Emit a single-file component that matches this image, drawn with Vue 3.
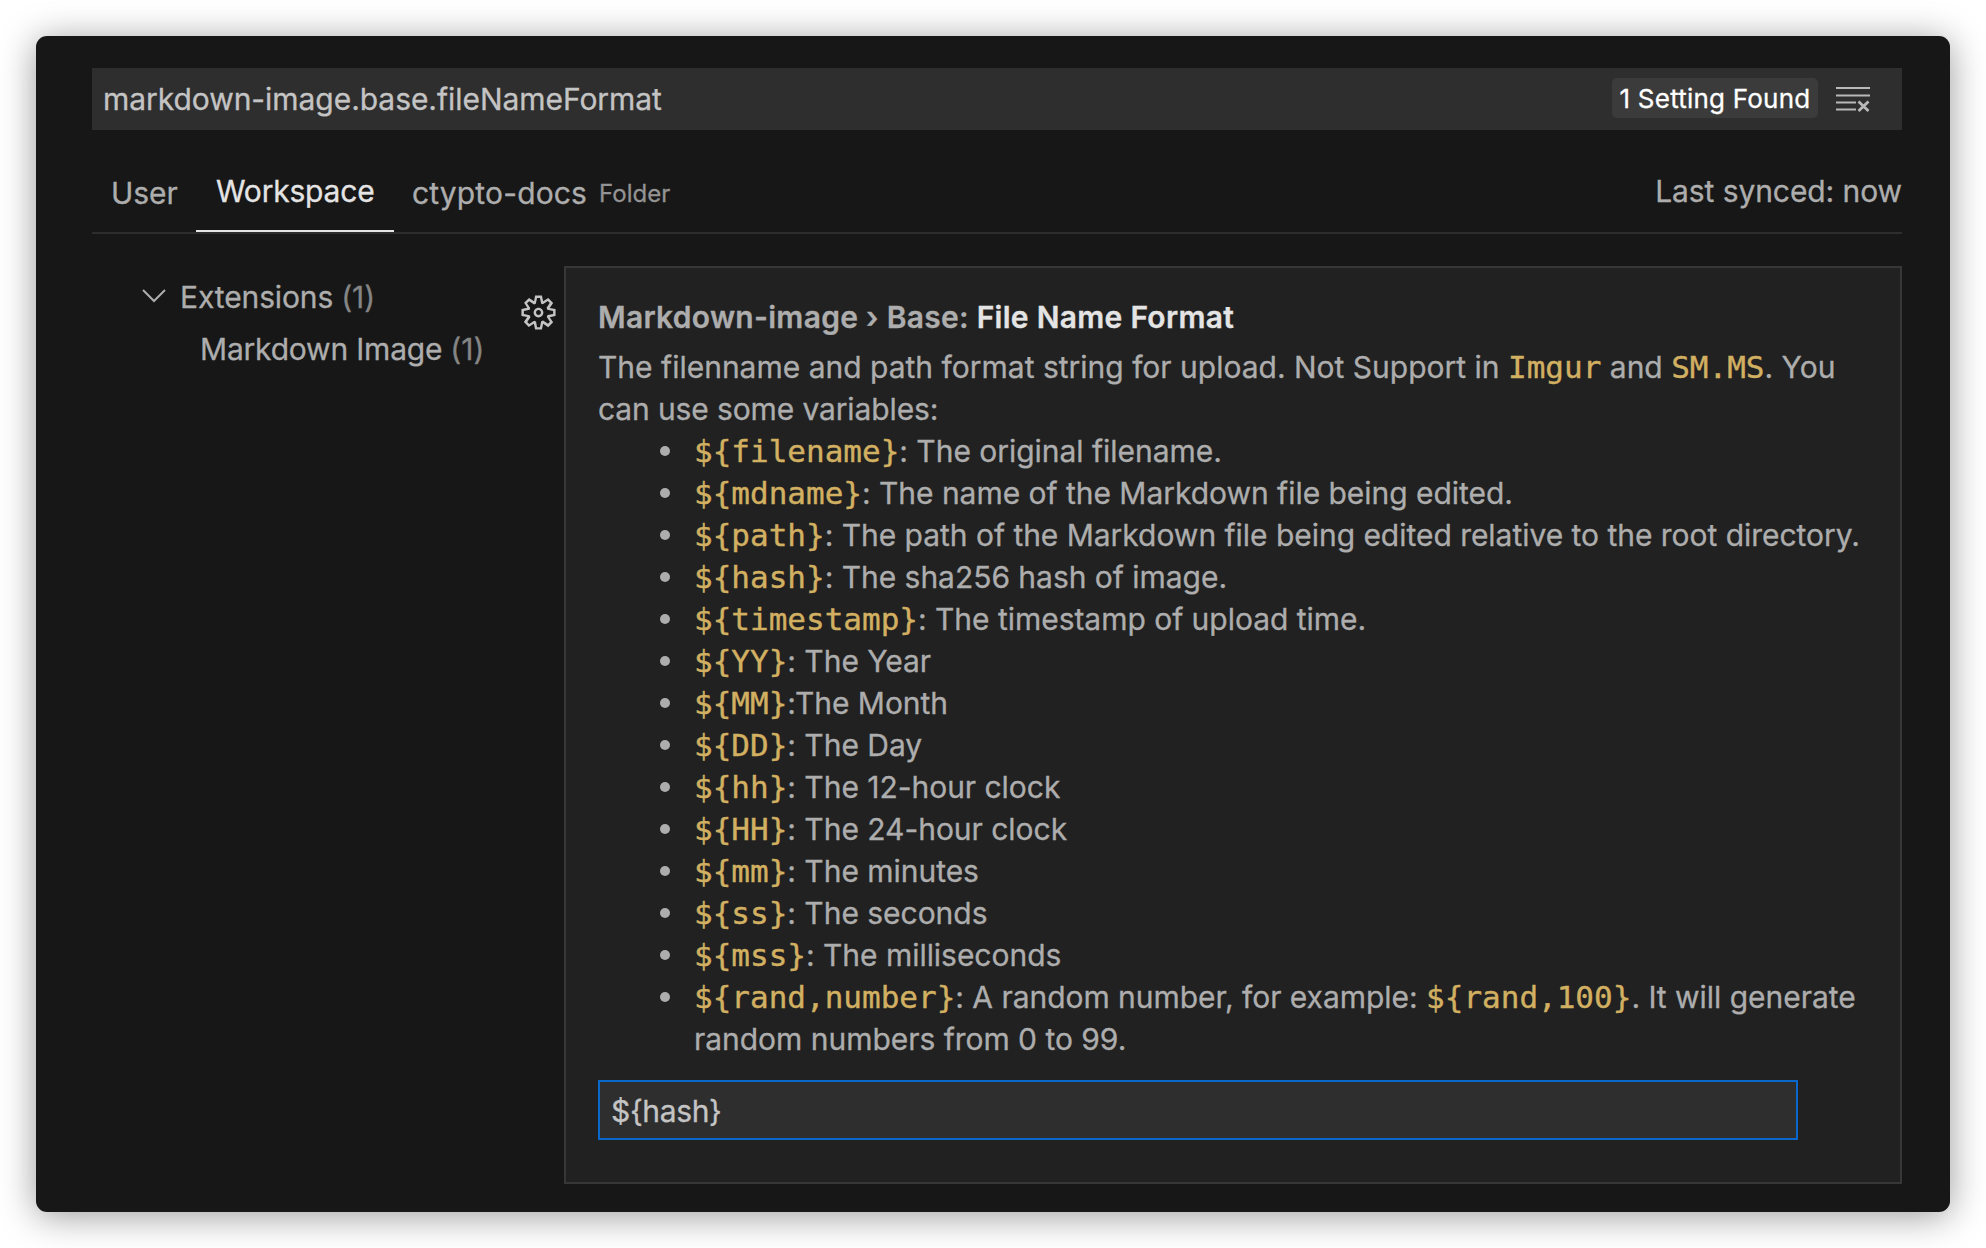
<script setup>
const variables = [
  { name: '${filename}', text: ': The original filename.' },
  { name: '${mdname}', text: ': The name of the Markdown file being edited.' },
  { name: '${path}', text: ': The path of the Markdown file being edited relative to the root directory.' },
  { name: '${hash}', text: ': The sha256 hash of image.' },
  { name: '${timestamp}', text: ': The timestamp of upload time.' },
  { name: '${YY}', text: ': The Year' },
  { name: '${MM}', text: ':The Month' },
  { name: '${DD}', text: ': The Day' },
  { name: '${hh}', text: ': The 12-hour clock' },
  { name: '${HH}', text: ': The 24-hour clock' },
  { name: '${mm}', text: ': The minutes' },
  { name: '${ss}', text: ': The seconds' },
  { name: '${mss}', text: ': The milliseconds' },
]
const randName = '${rand,number}'
const randExample = '${rand,100}'
const value = '${hash}'
</script>

<template>
  <div class="page">
    <main class="window">
      <div class="search">
        <span class="query">markdown-image.base.fileNameFormat</span>
        <span class="badge">1 Setting Found</span>
        <svg class="clear" viewBox="0 0 34 26" fill="none" stroke="currentColor" stroke-width="2">
          <path d="M0 2H34M0 9.5H34M0 16.5H20M0 23.5H20" />
          <path d="M22.5 15.5L32.5 25M32.5 15.5L22.5 25" stroke-width="2.8" />
        </svg>
      </div>

      <nav class="tabs">
        <span class="tab user">User</span>
        <span class="tab active">Workspace</span>
        <span class="tab folder">ctypto-docs<small>Folder</small></span>
        <span class="sync">Last synced: now</span>
      </nav>

      <div class="body">
        <aside class="tree">
          <div class="node root">
            <svg class="chevron" viewBox="0 0 24 14" fill="none" stroke="currentColor" stroke-width="2">
              <path d="M1 1L12 12L23 1" />
            </svg>
            <span class="label">Extensions</span><span class="count">(1)</span>
          </div>
          <div class="node child">
            <span class="label">Markdown Image</span><span class="count">(1)</span>
          </div>
        </aside>
        <svg class="gear" viewBox="0 0 16 16" fill="currentColor">
          <path fill-rule="evenodd" clip-rule="evenodd" d="M9.1 4.4L8.6 2H7.4l-.5 2.4-.7.3-2-1.3-.9.8 1.3 2-.2.7-2.4.5v1.2l2.4.5.3.8-1.3 2 .8.8 2-1.3.8.3.4 2.3h1.2l.5-2.4.8-.3 2 1.3.8-.8-1.3-2 .3-.8 2.3-.4V7.4l-2.4-.5-.3-.8 1.3-2-.8-.8-2 1.3-.7-.2zM9.4 1l.5 2.4L12 2.1l2 2-1.4 2.1 2.4.4v2.8l-2.4.5L14 12l-2 2-2.1-1.4-.5 2.4H6.6l-.5-2.4L4 13.9l-2-2 1.4-2.1L1 9.4V6.6l2.4-.5L2.1 4l2-2 2.1 1.4.4-2.4h2.8zm.6 7c0 1.1-.9 2-2 2s-2-.9-2-2 .9-2 2-2 2 .9 2 2zM8 9c.6 0 1-.4 1-1s-.4-1-1-1-1 .4-1 1 .4 1 1 1z" />
        </svg>
        <section class="setting">
          <h1 class="title">Markdown-image › Base: <b>File Name Format</b></h1>
          <p class="desc">The filenname and path format string for upload. Not Support in <code>Imgur</code> and <code>SM.MS</code>. You<br><span class="tight">can use some variables:</span></p>
          <ul class="list">
            <li v-for="v in variables" :key="v.name"><code>{{ v.name }}</code>{{ v.text }}</li>
            <li><code>{{ randName }}</code>: A random number, for example: <code>{{ randExample }}</code>. It will generate<br>random numbers from 0 to 99.</li>
          </ul>
          <div class="field">{{ value }}</div>
        </section>
      </div>
    </main>
  </div>
</template>

<style>
body { margin: 0; background: #fff; }
</style>

<style scoped>
.page {
  box-sizing: border-box;
  width: 1986px;
  height: 1248px;
  padding: 36px;
  overflow: hidden;
  font-family: Inter, "Liberation Sans", sans-serif;
  font-size: 30px;
  line-height: 42px;
  letter-spacing: -0.03px;
  -webkit-text-stroke: 0.3px currentColor;
  color: #adadad;
  white-space: nowrap;
}
.window {
  box-sizing: border-box;
  height: 1176px;
  padding: 32px 48px 28px 56px;
  border-radius: 11px;
  background: #171717;
  box-shadow: 0 4px 36px rgba(0, 0, 0, 0.4);
}
.search {
  box-sizing: border-box;
  display: flex;
  align-items: center;
  height: 62px;
  padding: 0 32px 0 11px;
  background: #2e2e2e;
  color: #c4c4c4;
}
.query { flex: 1; letter-spacing: -0.05px; }
.badge {
  box-sizing: border-box;
  width: 206px;
  height: 40px;
  margin-right: 18px;
  margin-bottom: 2px;
  border-radius: 5px;
  background: #3b3b3b;
  color: #fff;
  font-size: 26px;
  line-height: 41px;
  letter-spacing: 0.22px;
  text-align: center;
}
.clear { width: 34px; height: 26px; margin-bottom: 1px; color: #b8b8b8; }
.tabs {
  box-sizing: border-box;
  display: flex;
  height: 104px;
  padding-top: 29px;
  border-bottom: 2px solid #2d2d2d;
}
.tab { box-sizing: border-box; height: 73px; padding-top: 13px; }
.user { width: 104px; padding-left: 19px; }
.active { width: 198px; padding-top: 11px; padding-left: 20px; border-bottom: 2px solid #e4e4e4; color: #e4e4e4; letter-spacing: -0.2px; }
.folder { display: flex; padding-left: 18px; letter-spacing: 0.15px; }
.folder small { margin-top: 1px; margin-left: 12px; font-size: 24px; letter-spacing: 0; color: #939393; }
.sync { margin-left: auto; padding-top: 11px; letter-spacing: -0.08px; }
.body { display: flex; padding-top: 32px; }
.tree { width: 427px; padding-top: 5px; }
.node { display: flex; align-items: center; height: 52px; }
.root { padding-left: 50px; }
.child { padding-left: 108px; }
.label { letter-spacing: -0.12px; }
.child .label { letter-spacing: -0.2px; }
.chevron { width: 24px; height: 14px; margin: 0 14px 2px 0; }
.count { margin-left: 8px; color: #858585; }
.gear { width: 39px; height: 39px; margin-top: 27px; margin-right: 6.5px; margin-left: -0.5px; color: #c4c4c4; }
.setting {
  box-sizing: border-box;
  width: 1338px;
  height: 918px;
  padding: 28px 32px;
  border: 2px solid #373737;
  background: #212121;
}
.title { margin: 0 0 8px; font-size: 30px; font-weight: 600; line-height: 42px; letter-spacing: 0.28px; }
.title b { font-weight: 600; color: #e4e4e4; }
.desc { margin: 0; letter-spacing: 0; }
.tight { letter-spacing: -0.12px; }
.list { margin: 0 0 20px; padding: 0 0 0 96px; list-style: none; }
.list li { position: relative; }
.list li::before {
  content: "";
  position: absolute;
  left: -34px;
  top: 16px;
  width: 10px;
  height: 10px;
  border-radius: 50%;
  background: #adadad;
}
code {
  font-family: "DejaVu Sans Mono", monospace;
  font-size: 31px;
  line-height: 0;
  letter-spacing: 0;
  -webkit-text-stroke: 0.4px currentColor;
  color: #d2b062;
}
.field {
  box-sizing: border-box;
  width: 1200px;
  height: 60px;
  padding-left: 11px;
  border: 2px solid #0a68cc;
  background: #2e2e2e;
  color: #c4c4c4;
  line-height: 58px;
  letter-spacing: -0.35px;
}
</style>
